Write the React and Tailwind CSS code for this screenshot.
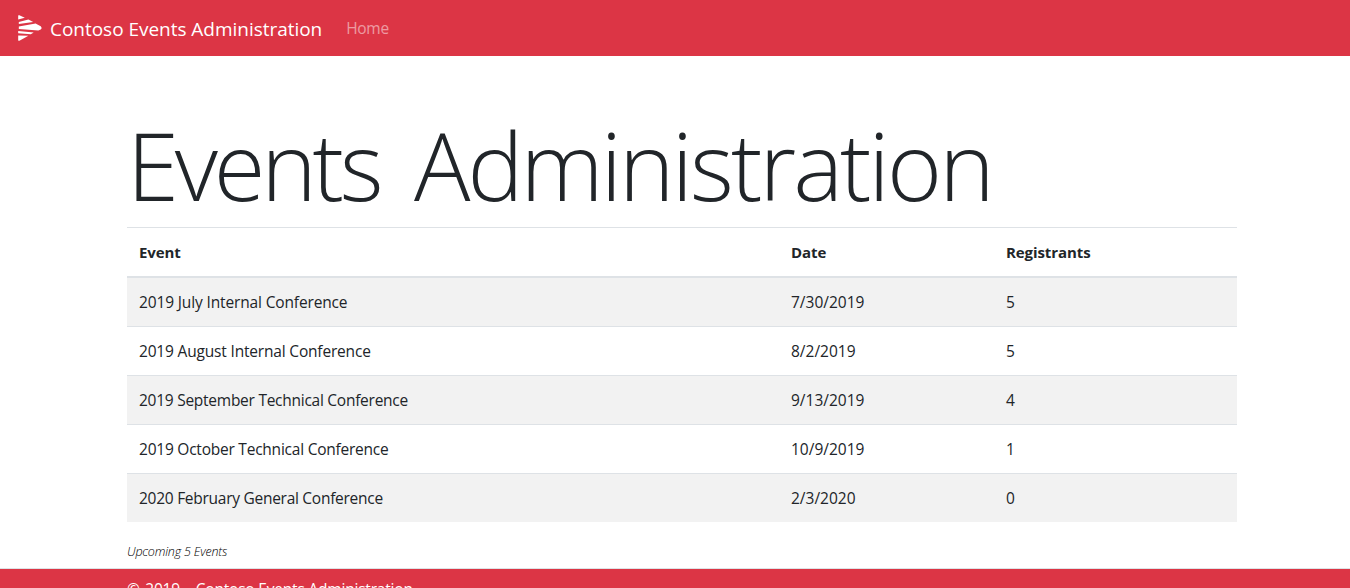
const events = [
  { name: "2019 July Internal Conference", date: "7/30/2019", registrants: 5, tracking: "tracking-[-0.14px]" },
  { name: "2019 August Internal Conference", date: "8/2/2019", registrants: 5, tracking: "tracking-[-0.18px]" },
  { name: "2019 September Technical Conference", date: "9/13/2019", registrants: 4, tracking: "tracking-[-0.26px]" },
  { name: "2019 October Technical Conference", date: "10/9/2019", registrants: 1, tracking: "tracking-[-0.23px]" },
  { name: "2020 February General Conference", date: "2/3/2020", registrants: 0, tracking: "tracking-[-0.27px]" },
];

function Logo() {
  return (
    <svg className="h-[26px] w-6 shrink-0" viewBox="0 0 24 26" fill="#fff" aria-hidden="true">
      <path d="M.2.6Q.5-.1 1.4.3L6.8 2.8.2 4.5Z" />
      <path d="M.8 6.9 10.4 4.5 15.2 7 .8 8.9Z" />
      <path d="M.8 11.4 17.6 8.6 22.7 11.2Q24.5 13 22.7 14.6L20.3 15.6.8 14Z" />
      <path d="M.2 15.9 15.7 17.6 12.8 19.2.2 18.2Z" />
      <path d="M.2 20.4 10.4 20.8 1.4 25.7Q.4 26 .2 25.2Z" />
    </svg>
  );
}

export default function App() {
  return (
    <div className="h-[588px] w-full overflow-hidden bg-white font-['Open_Sans','Noto_Sans',sans-serif] text-base leading-6 text-[#212529]">
      <nav className="flex h-14 items-center bg-[#dc3545] pl-[18px]">
        <a className="flex items-center text-white" href="#">
          <Logo />
          <span className="ml-2 whitespace-nowrap pt-0.5 text-[19px] leading-[30px] tracking-[-0.03px]">Contoso Events Administration</span>
        </a>
        <a className="ml-6 text-[15.5px] tracking-[-0.3px] text-white/50" href="#">Home</a>
      </nav>
      <main className="ml-[127px] w-[1110px] pt-[54px]">
        <h1 className="mb-1.5 flex h-[111px] gap-[34px] whitespace-nowrap text-[94px] font-light leading-[111px]">
          <span className="w-[253px] tracking-[-4.2px]">Events</span>
          <span className="tracking-[-2.9px]">Administration</span>
        </h1>
        <table className="w-full table-fixed border-collapse text-left">
          <colgroup>
            <col className="w-[652px]" />
            <col className="w-[215px]" />
            <col className="w-[243px]" />
          </colgroup>
          <thead>
            <tr className="h-[49px] border-b-2 border-t border-[#dee2e6]">
              <th className="px-3 text-[15px] font-bold tracking-[-0.08px]">Event</th>
              <th className="px-3 text-[15px] font-bold tracking-[-0.08px]">Date</th>
              <th className="px-3 text-[15px] font-bold tracking-[-0.08px]">Registrants</th>
            </tr>
          </thead>
          <tbody>
            {events.map((e) => (
              <tr key={e.name} className="h-[49px] border-t border-[#dee2e6] first:h-[50px] last:h-12 odd:bg-[#f2f2f2]">
                <td className={`px-3 text-[15.5px] ${e.tracking}`}>{e.name}</td>
                <td className="px-3 text-[15.5px]">{e.date}</td>
                <td className="px-3 text-[15.5px]">{e.registrants}</td>
              </tr>
            ))}
          </tbody>
        </table>
        <p className="mt-[18px] h-7 whitespace-nowrap text-[12.5px] font-light italic leading-6 tracking-[-0.18px] text-black">Upcoming 5 Events</p>
      </main>
      <footer className="border-t border-[#dee2e6] bg-[#dc3545] pb-4 pl-[127px] pt-2 text-[15.5px] tracking-[-0.2px] text-white">
        <span className="[word-spacing:1.7px]">© 2019 - </span>Contoso Events Administration
      </footer>
    </div>
  );
}
